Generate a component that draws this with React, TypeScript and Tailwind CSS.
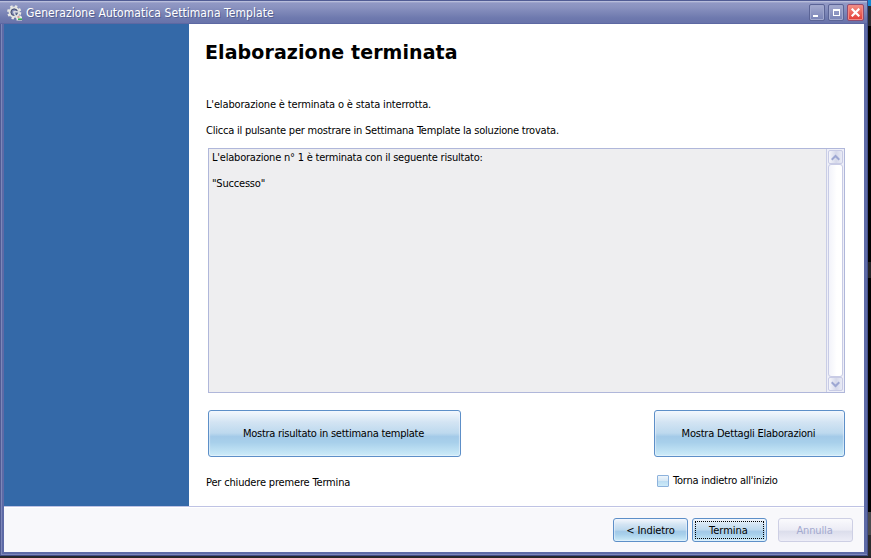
import type { ReactNode } from "react";

const blueFill =
  "bg-[linear-gradient(to_bottom,#f4f8fd_0%,#d3e4f3_25%,#bdd9ee_49%,#a3cae8_57%,#a8d0eb_70%,#cdecf9_100%)] shadow-[inset_0_0_1px_1px_rgba(240,248,255,0.55)]";

function GearIcon() {
  return (
    <svg width="16" height="16" viewBox="0 0 16 16">
      <circle cx="7.2" cy="7.2" r="5.7" fill="none" stroke="#e9e9e6" strokeWidth="2.8" strokeDasharray="2.24 2.24" />
      <circle cx="7.2" cy="7.2" r="4.6" fill="#7d86b4" stroke="#e4e4e0" strokeWidth="2" />
      <circle cx="7.2" cy="7.2" r="3.2" fill="none" stroke="#4a5270" strokeWidth="1" />
      <path d="M6.5 6.5 12 7M6.5 6.5 9 12" stroke="#d9dbe0" strokeWidth="1.5" />
      <path d="M9.5 10.5h4l1.5 1.5v3.5H9.5z" fill="#e8ece6" />
      <path d="M10.5 12h2" stroke="#d8574c" />
      <path d="M11 14.2h4" stroke="#27a94a" strokeWidth="1.5" />
    </svg>
  );
}

function Button({ className, children }: { className: string; children: ReactNode }) {
  return (
    <button
      className={`flex items-center justify-center rounded-[3px] border whitespace-nowrap ${className}`}
    >
      {children}
    </button>
  );
}

function ScrollArrow({ down }: { down?: boolean }) {
  return (
    <div className="flex h-[14px] w-[15px] shrink-0 items-center justify-center rounded-[2px] border border-[#c8cbe5] bg-[linear-gradient(to_right,#f5f6fb,#d5d8ea_55%,#e9ebf6)]">
      <svg width="9" height="7" viewBox="0 0 9 7" className={down ? "" : "rotate-180"}>
        <path d="M.7 1.2 4.5 5 8.3 1.2" fill="none" stroke="#9da7d2" strokeWidth="2" />
      </svg>
    </div>
  );
}

export default function App() {
  return (
    <div className="flex h-[558px] w-[871px] overflow-hidden bg-[#26262a] font-['DejaVu_Sans_Condensed','DejaVu_Sans',sans-serif] text-[11px] leading-[13px] text-black">
      <div className="flex h-[556px] w-[868px] shrink-0 flex-col border-b border-r border-[#434f89] bg-[#6673ad]">
        <header className="flex h-[24px] shrink-0 items-center border-t border-[#515c94] bg-[linear-gradient(to_bottom,#c5c9e3_0px,#9198c4_2px,#8b93c0_6px,#6e79ae_17px,#6973aa_22px,#515d9b_23px)] pl-[7px] pr-[3px] text-white">
          <GearIcon />
          <h1 className="ml-[3px] flex-1 text-[12px] leading-[16px] tracking-[0.06px] whitespace-nowrap [text-shadow:1px_1px_0_#56608f]">
            Generazione Automatica Settimana Template
          </h1>
          <div className="flex gap-[3px]">
            <button className="flex h-[17px] w-[16px] items-end rounded-[2px] border border-[#5b6496] bg-[linear-gradient(#a5abcf,#7882b5)] pb-[3px] pl-[3px] shadow-[inset_0_0_0_1px_#a0a7cd]">
              <span className="h-[2px] w-[5px] bg-white" />
            </button>
            <button className="flex h-[17px] w-[16px] items-center justify-center rounded-[2px] border border-[#5b6496] bg-[linear-gradient(#a5abcf,#7882b5)] shadow-[inset_0_0_0_1px_#a0a7cd]">
              <span className="h-[7px] w-[7px] border border-t-2 border-white" />
            </button>
            <button className="flex h-[17px] w-[17px] items-center justify-center rounded-[2px] border border-[#8f4c70] bg-[linear-gradient(#f39186,#e33b35)] shadow-[inset_0_0_0_1px_#f08a85]">
              <svg width="9" height="9" viewBox="0 0 9 9">
                <path d="M.7.7 8.3 8.3M8.3.7.7 8.3" stroke="#fff" strokeWidth="2.2" />
              </svg>
            </button>
          </div>
        </header>

        <div className="flex min-h-0 flex-1 border-l border-[#515c94]">
          <div className="flex min-h-0 flex-1 flex-col border-b border-l border-[#7d87b9]">
            <div className="flex min-h-0 flex-1 flex-col border-b-[2px] border-l-[2px] border-r-[3px] border-[#5d6aa6]">
              <div className="flex h-[482px] shrink-0">
                <aside className="w-[185px] shrink-0 bg-[#3469a8]" />
                <main className="flex flex-1 flex-col bg-white pl-[17px] pr-[19px]">
                  <h2 className="mt-[16px] -ml-px font-['DejaVu_Sans',sans-serif] text-[19px] leading-[24px] font-bold tracking-[0.09px] whitespace-nowrap">
                    Elaborazione terminata
                  </h2>
                  <p className="mt-[34px] tracking-[-0.15px]">L'elaborazione è terminata o è stata interrotta.</p>
                  <p className="mt-[13px] tracking-[-0.22px]">
                    Clicca il pulsante per mostrare in Settimana Template la soluzione trovata.
                  </p>
                  <div className="mt-[11px] ml-[2px] flex h-[245px] shrink-0 border border-[#b0b7da] bg-[#eeeef0]">
                    <div className="flex-1 pl-[3px] pt-[2px]">
                      <p className="tracking-[-0.21px]">L'elaborazione n° 1 è terminata con il seguente risultato:</p>
                      <p className="mt-[13px] tracking-[-0.2px]">"Successo"</p>
                    </div>
                    <div className="flex w-[18px] flex-col items-center border-l border-[#c9cde6] bg-[#eeeff8] py-[1px]">
                      <ScrollArrow />
                      <div className="w-[15px] flex-1 rounded-[3px] border border-[#c8cbe5] bg-[linear-gradient(to_right,#f2f3fa,#ffffff_60%)]" />
                      <ScrollArrow down />
                    </div>
                  </div>
                  <div className="mt-[17px] ml-[2px] flex justify-between">
                    <Button className={`h-[47px] w-[253px] border-[#5d8fc8] pr-[2px] tracking-[-0.25px] ${blueFill}`}>
                      Mostra risultato in settimana template
                    </Button>
                    <Button className={`h-[47px] w-[191px] border-[#5d8fc8] pr-[2px] tracking-[-0.22px] ${blueFill}`}>
                      Mostra Dettagli Elaborazioni
                    </Button>
                  </div>
                  <div className="mt-[16px] flex items-start justify-between">
                    <p className="mt-[3px] tracking-[-0.17px]">Per chiudere premere Termina</p>
                    <label className="mt-px flex w-[188px] items-center gap-[4px] tracking-[-0.24px] whitespace-nowrap">
                      <span className="h-[12px] w-[12px] rounded-[1px] border border-[#8db2dc] bg-[linear-gradient(#eef5fb_0%,#d5e7f5_50%,#bcdcf2_52%,#cdebf9_100%)]" />
                      Torna indietro all'inizio
                    </label>
                  </div>
                </main>
              </div>
              <footer className="flex flex-1 items-start justify-end border-t border-[#bfc3e4] bg-[#f8f8fb] pt-[11px] pr-[11px] shadow-[inset_0_1px_0_#fff]">
                <Button className={`mr-[4px] h-[24px] w-[75px] border-[#5d8fc8] tracking-[-0.1px] ${blueFill}`}>
                  &lt; Indietro
                </Button>
                <Button className={`mr-[11px] h-[24px] w-[75px] border-[#5d8fc8] ${blueFill}`}>
                  <span className="flex h-[18px] w-[69px] items-center justify-center border border-dotted border-black pr-[2px]">
                    Termina
                  </span>
                </Button>
                <Button className="h-[24px] w-[75px] border-[#cdcfe4] bg-[linear-gradient(#fafafd_0%,#ececf5_49%,#dcdeec_57%,#ededf7_100%)] pr-[2px] tracking-[-0.15px] text-[#a3a9cf]">
                  Annulla
                </Button>
              </footer>
            </div>
          </div>
        </div>
      </div>
      <div className="flex h-[556px] flex-1 flex-col bg-black">
        <div className="h-[6px] bg-[#1688d2]" />
        <div className="h-[20px] bg-[#2b2b30]" />
        <div className="mt-[236px] h-[16px] bg-[#242426]" />
        <div className="mt-[234px] h-[23px] bg-[#4a4a4e]" />
        <div className="flex-1 bg-[#2b2b2e]" />
      </div>
    </div>
  );
}
